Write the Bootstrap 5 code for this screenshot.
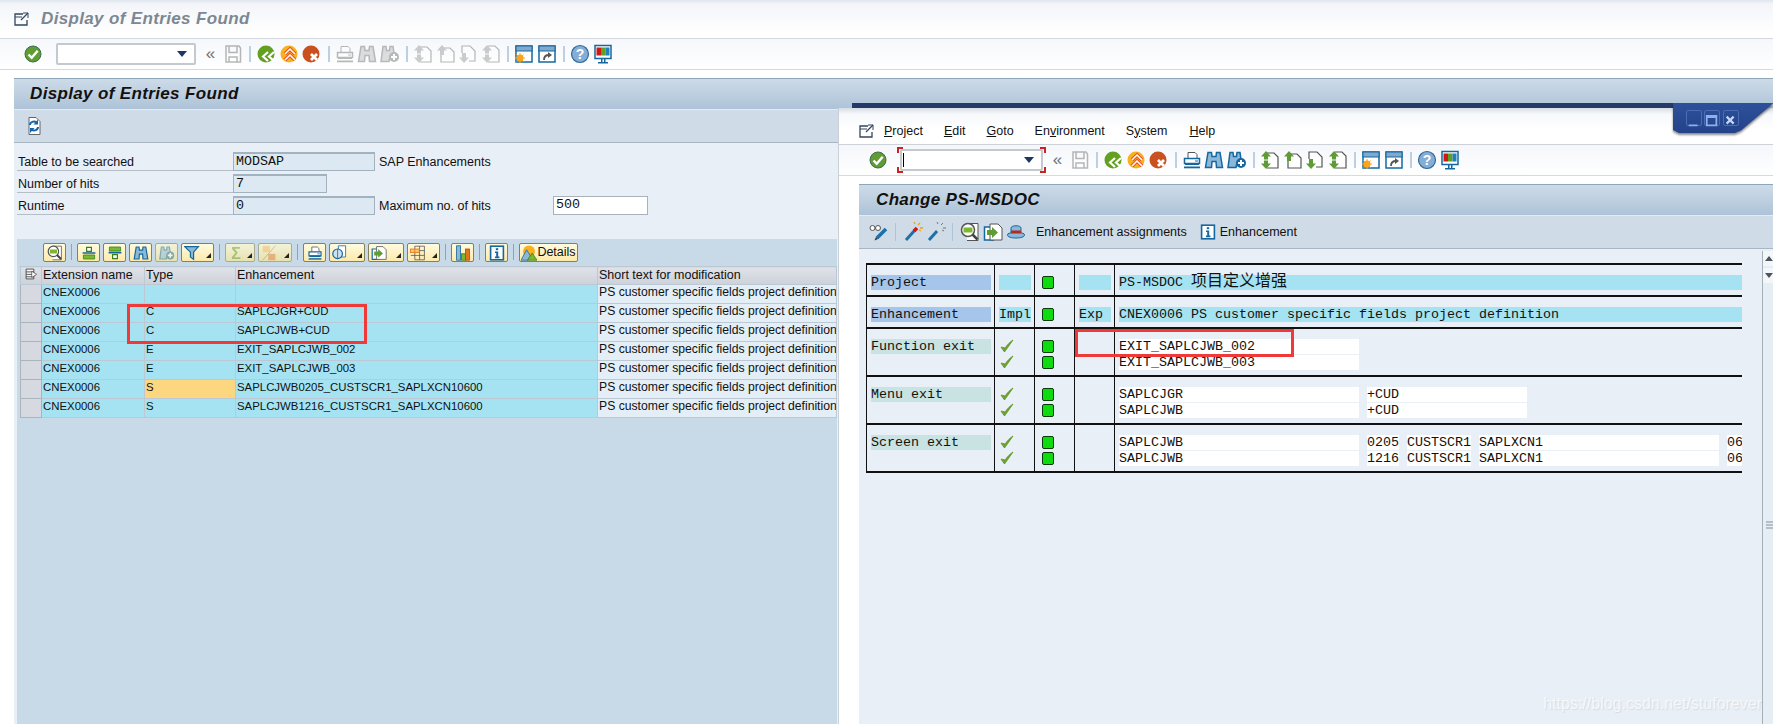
<!DOCTYPE html>
<html lang="en">
<head>
<meta charset="UTF-8">
<meta name="viewport" content="width=device-width, initial-scale=1.0">
<title>Display of Entries Found</title>
<link rel="stylesheet" href="https://cdn.jsdelivr.net/npm/bootstrap@5.3.0/dist/css/bootstrap.min.css">
<style>
    html, body { height: 100%; overflow: hidden; }
    body { background: #fff; font-family: "Liberation Sans", Arial, sans-serif; font-size: 12.5px; color: #111; position: relative; }
    .mono { font-family: "Liberation Mono", "Noto Sans CJK SC", monospace; font-size: 13.33px; }
    .cjk-text { font-size: 16px; font-family: "Noto Sans CJK SC", sans-serif; line-height: 0; }

    /* window title + system toolbar */
    .win-title { height: 39px; padding-left: 13px; background: linear-gradient(#dfe6ee 0, #f3f5f9 4px, #fff 34px); border-bottom: 1px solid #d5dae0; }
    .win-title-text { font-size: 17px; font-weight: bold; font-style: italic; letter-spacing: .35px; color: #7d8791; margin-left: 12px; }
    .title-ico { width: 16px; height: 16px; display: block; flex: none; }
    .sys-bar { height: 31px; padding-left: 22px; background: linear-gradient(#f5f7fb, #fff); border-bottom: 1px solid #d5dae0; }
    .ico { width: 20px; height: 20px; display: block; }
    .ico-box { width: 22.5px; height: 22px; flex: none; display: flex; align-items: center; justify-content: center; }
    .ico-off .ico { filter: grayscale(1) opacity(.42); }
    .bar-sep { width: 11px; flex: none; display: flex; justify-content: center; }
    .bar-sep::before { content: ""; width: 2px; height: 16px; background: #bcd0e2; margin-left: 1px; }
    .cmd-box { width: 140px; height: 22px; margin: 0 4px 0 11px; background: #fff; border: 2px solid #c3c9cf; border-radius: 2px; position: relative; flex: none; }
    .cmd-box::after { content: ""; position: absolute; right: 7px; top: 6px; border: 5px solid transparent; border-top: 6px solid #1f3564; border-bottom: 0; }
    .dbl-arrow { width: 22px; text-align: center; font-size: 17px; color: #707070; line-height: 20px; flex: none; }

    /* screen panel */
    .scr-panel { margin-left: 14px; position: relative; }
    .scr-head { height: 32px; padding-left: 16px; font-size: 17px; font-weight: bold; font-style: italic; letter-spacing: .35px; color: #111; background: linear-gradient(#cddbe8, #aec3d8); border-top: 1px solid #8fa5ba; border-bottom: 1px solid #e4ebf2; }
    .app-bar { height: 33px; padding-left: 9px; background: #cfdbe6; border-bottom: 1px solid #a9b6c2; }
    .scr-body { background: #e8eff6; padding: 9px 0 0 3px; height: 581px; }

    /* selection fields */
    .fld-row { height: 19px; margin-bottom: 3px; }
    .fld-label { width: 216px; height: 19px; border-bottom: 1px solid #b5bec7; padding: 1px 0 0 1px; }
    .fld-val { height: 19px; background: #dde9f2; border: 1px solid #a3b2bf; border-top-width: 2px; padding-left: 2px; line-height: 15px; }
    .fld-wide { width: 142px; }
    .fld-short { width: 94px; }
    .fld-after { padding: 1px 0 0 4px; }
    .fld-after-max { width: 178px; }
    .fld-input { width: 95px; height: 19px; background: #fff; border: 1px solid #a9b2ba; padding-left: 2px; line-height: 16px; }

    /* ALV */
    .alv-wrap { width: 820px; margin-top: 24px; height: 486px; background: #c8d9e7; position: relative; }
    .alv-tools { height: 27px; padding: 4px 0 0 26px; gap: 3px; }
    .alv-btn { height: 19px; border: 1px solid #85805f; border-radius: 2px; background: linear-gradient(#fffbe0, #fdeaa9); display: flex; align-items: center; justify-content: center; font-size: 12.5px; flex: none; overflow: hidden; }
    .alv-btn .ico { width: 16px; height: 16px; }
    .alv-off { border-color: #a8ab94; background: linear-gradient(#f2f2d8, #e8e2b0); }
    .alv-off .ico { filter: opacity(.5); }
    .b23 { width: 23px; } .b30 { width: 30px; } .b33 { width: 33px; } .b34 { width: 34px; } .b36 { width: 36px; } .b59 { width: 59px; }
    .has-menu { justify-content: flex-start; padding-left: 2px; position: relative; }
    .has-menu::after { content: ""; position: absolute; right: 2px; bottom: 3px; border-style: solid; border-width: 0 0 5px 5px; border-color: transparent transparent #222 transparent; }
    .alv-sep { width: 1px; height: 16px; margin: 1px 2px 0; background: #8da3b6; flex: none; }
    .alv-grid { margin-left: 3px; table-layout: fixed; width: 817px; border-collapse: collapse; }
    .alv-grid th, .alv-grid td { height: 19px; padding: 0 0 1px 1px; font-weight: normal; white-space: nowrap; overflow: hidden; border: 1px solid #bcc8d3; line-height: 15px; vertical-align: top; }
    .alv-grid th { height: 18px; padding: 1px 0 0 1px; background: linear-gradient(#dfe2e8, #cdd1d9); }
    .alv-grid th .ico { width: 14px; height: 14px; margin: 0 auto; }
    .alv-grid td { background: #a5e3f3; font-size: 11.4px; }
    .alv-grid td.row-mark { background: #d6dae0; border-color: #aab4bd; }
    .alv-grid td.txt-col { background: #e3eef6; font-size: 12.2px; }
    .alv-grid td.hot { background: #fdd780; }
    .red-box { position: absolute; border: 3px solid #f03a3a; }
    .red-left { left: 110px; top: 65px; width: 240px; height: 40px; }
    .red-right { left: 216px; top: 80px; width: 219px; height: 28px; }

    /* second window, sits over the first */
    .sap-win { position: absolute; left: 838px; top: 108px; right: 0; bottom: 0; background: #fff; border-left: 1px solid #c9d0d8; }
    .win-strip { position: absolute; left: 13px; right: 100px; top: -5px; height: 5px; background: linear-gradient(#1d3a78, #2a3a58); }
    .ctrl-shadow { position: absolute; right: 0; top: -5px; width: 100px; height: 30px; filter: drop-shadow(0 2px 1px rgba(0,0,0,.45)); }
    .win-ctrl { width: 100%; height: 100%; position: relative; background: linear-gradient(#2d5199, #23428a); clip-path: polygon(0 0, 100% 0, 100% 2%, 68% 92%, 62% 100%, 6% 100%, 0 90%); }
    .ctrl-btn { position: absolute; top: 7px; width: 16px; height: 16px; border: 1px solid #4a6db5; border-radius: 2px; }
    .ctrl-1 { left: 13px; } .ctrl-2 { left: 31px; } .ctrl-3 { left: 50px; }
    .menu-row { height: 37px; padding: 10px 0 0 19px; background: linear-gradient(#d6dde6 0, #f6f8fb 6px, #fff 22px); border-bottom: 1px solid #cdd2d8; }
    .menu-item { font-size: 12.5px; }
    .mi1 { margin-left: 10px; } .mi2 { margin-left: 21px; } .mi3 { margin-left: 21px; } .mi4 { margin-left: 21px; } .mi5 { margin-left: 21px; } .mi6 { margin-left: 22px; }
    .sys-bar2 { height: 31px; padding-left: 28px; background: linear-gradient(#f5f7fb, #fff); border-bottom: 1px solid #d5dae0; }
    .cmd-frame { width: 149px; height: 26px; margin: 0 1px 0 7px; padding: 2px 3px; flex: none; background:
        linear-gradient(#d02020, #d02020) 0 0/6px 2px no-repeat, linear-gradient(#d02020, #d02020) 0 0/2px 6px no-repeat,
        linear-gradient(#d02020, #d02020) 100% 0/6px 2px no-repeat, linear-gradient(#d02020, #d02020) 100% 0/2px 6px no-repeat,
        linear-gradient(#d02020, #d02020) 0 100%/6px 2px no-repeat, linear-gradient(#d02020, #d02020) 0 100%/2px 6px no-repeat,
        linear-gradient(#d02020, #d02020) 100% 100%/6px 2px no-repeat, linear-gradient(#d02020, #d02020) 100% 100%/2px 6px no-repeat; }
    .cmd-frame .cmd-box { width: 143px; margin: 0; }
    .cmd-caret { position: absolute; left: 1px; top: 2px; width: 1px; height: 14px; background: #000; }
    .sec-panel { margin: 8px 0 0 20px; }
    .sec-head { height: 32px; padding-left: 17px; font-size: 17px; font-weight: bold; font-style: italic; letter-spacing: .35px; background: linear-gradient(#cddbe8, #aec3d8); border-top: 1px solid #8fa5ba; border-bottom: 1px solid #e4ebf2; }
    .sec-tools { height: 33px; padding-left: 8px; background: #cfdbe6; border-bottom: 1px solid #a9b6c2; }
    .sec-tools .ico-box { width: 23px; }
    .ico-small { width: 16px; height: 16px; }
    .tool-sep { width: 1px; height: 18px; background: #b0c4d6; margin: 0 5px; flex: none; }
    .tool-text { margin-left: 9px; }
    .info-gap { margin-left: 10px; }
    .sec-body { background: #e8eff6; height: 475px; position: relative; }
    .exit-wrap { padding: 14px 0 0 7px; width: 884px; position: relative; }
    .exit-grid { table-layout: fixed; width: 876px; border-collapse: collapse; }
    .exit-grid td { border: 1px solid #111; border-width: 2px 1px; padding: 10px 3px 0 4px; vertical-align: top; }
    .exit-grid td:last-child { border-right: 0; padding-right: 0; }
    .exit-grid tr.h32 td { height: 32px; }
    .exit-grid tr.h48 td { height: 48px; }
    .cell-line { height: 15px; margin-bottom: 1px; line-height: 15px; white-space: nowrap; overflow: hidden; }
    .lbl-blue { background: #a6c5ea; }
    .lbl-teal { background: #c9e2e2; }
    .cyan { background: #a5e3f3; }
    .white-cell { background: #fff; height: 15px; overflow: hidden; flex: none; }
    .w240 { width: 240px; } .w160 { width: 160px; } .w32 { width: 32px; } .w64 { width: 64px; } .w15 { width: 15px; }
    .line-flex { gap: 8px; }
    .led { width: 12px; height: 13px; background: #0fdc0f; border: 1px solid #0a3a0a; border-radius: 2px; margin: 1px 0 0 3px; }
    .ok-tick { width: 14px; height: 14px; display: block; margin-left: 1px; }
    .v-bar { position: absolute; left: 903px; top: 2px; width: 12px; bottom: 0; border-left: 1px solid #a7b0b9; background: #e6eef5; }
    .v-btn { height: 15px; background: #f4f7fa; margin-bottom: 2px; position: relative; }
    .v-btn::after { content: ""; position: absolute; left: 2px; top: 5px; border: 4px solid transparent; }
    .v-up::after { border-bottom: 5px solid #4a5560; border-top: 0; }
    .v-down::after { border-top: 5px solid #4a5560; border-bottom: 0; }
    .v-grip { position: absolute; left: 3px; top: 270px; width: 7px; height: 8px; background: repeating-linear-gradient(#b4bfca 0 2px, transparent 2px 3px); }
    .watermark { position: absolute; right: 11px; bottom: 8px; font-size: 16px; color: rgba(255,255,255,.7); text-shadow: 1px 1px 1px rgba(120,130,140,.18); }
</style>
</head>
<body>
<svg width="0" height="0" class="position-absolute">
  <defs>
    <symbol id="okay" viewBox="0 0 20 20"><circle cx="10" cy="10" r="8" fill="#5f9c36" stroke="#3f6f4a"/><path d="M5.500 10.500l3.200 3.200 6-7" fill="none" stroke="#fff" stroke-width="2.400"/></symbol>
    <symbol id="save" viewBox="0 0 20 20"><path d="M3 2h13l1.500 2v14H3z M6 2.500v6h8v-6 M6 18v-5h8v5" fill="#fff" stroke="#555" stroke-width="1.500"/></symbol>
    <symbol id="back" viewBox="0 0 20 20"><circle cx="10" cy="10" r="8.500" fill="#62a01f"/><path d="M12 8l-5 4.500 5 4.500 M18 8l-5 4.500 5 4.500" fill="none" stroke="#fff" stroke-width="2.200"/></symbol>
    <symbol id="exit" viewBox="0 0 20 20"><circle cx="10" cy="10" r="8.500" fill="#f9b11d"/><path d="M6 10l5-5 5 5 M6 16l5-5 5 5" fill="none" stroke="#e2561c" stroke-width="3.600"/><path d="M6 10l5-5 5 5 M6 16l5-5 5 5" fill="none" stroke="#fff" stroke-width="1.500"/></symbol>
    <symbol id="stop" viewBox="0 0 20 20"><circle cx="10" cy="10" r="8.500" fill="#c9511f"/><path d="M10 10l6 6 M16 10l-6 6" stroke="#fff" stroke-width="2.800"/></symbol>
    <symbol id="print" viewBox="0 0 20 20"><path d="M6 8V2.500h7l2 2V8" fill="#fff" stroke="#555"/><path d="M2.500 8.500h15v5h-15z" fill="#fff" stroke="#15689f" stroke-width="1.500"/><path d="M3 13h14v2H3z" fill="#15689f"/><path d="M2 16.500h16v1.800H2z" fill="#15689f"/><path d="M13 10.500h3v1h-3z" fill="#15689f"/></symbol>
    <symbol id="find" viewBox="0 0 20 20"><path d="M4 2.500h3.500l.5 4h4l.5-4H16l2.500 15h-6l-.5-6H8l-.5 6h-6z" fill="#8bb7d9" stroke="#15689f" stroke-width="1.500"/></symbol>
    <symbol id="findplus" viewBox="0 0 20 20"><path d="M3 2.500h3l.5 4h3l.5-4h3l1 7-4 3-1 5H1z" fill="#8bb7d9" stroke="#15689f" stroke-width="1.500"/><circle cx="14" cy="13" r="5" fill="#15689f"/><path d="M14 10v6 M11 13h6" stroke="#fff" stroke-width="2"/></symbol>
    <symbol id="first" viewBox="0 0 20 20"><path d="M7 3h7l4 4v11H7" fill="#fff" stroke="#555" stroke-width="1.200"/><path d="M6 1L1 6.500h3v3h4v-3h3z M6 19l-5-5.500h3v-3h4v3h3z" fill="#5f9c36"/></symbol>
    <symbol id="prev" viewBox="0 0 20 20"><path d="M7 4h7l4 4v10H5v-7" fill="#fff" stroke="#555" stroke-width="1.200"/><path d="M6 1L1 6.500h3V11h4V6.500h3z" fill="#5f9c36"/></symbol>
    <symbol id="next" viewBox="0 0 20 20"><path d="M4 9V2h8l5 5v10h-6" fill="#fff" stroke="#555" stroke-width="1.200"/><path d="M6 19l-5-5.500h3V9h4v4.500h3z" fill="#5f9c36"/></symbol>
    <symbol id="last" viewBox="0 0 20 20"><path d="M7 2h7l4 4v12H7" fill="#fff" stroke="#555" stroke-width="1.200"/><path d="M6 1L1 6.500h3v3h4v-3h3z M6 19l-5-5.500h3v-3h4v3h3z" fill="#5f9c36"/></symbol>
    <symbol id="newwin" viewBox="0 0 20 20"><rect x="2" y="2" width="16" height="16" fill="#fff" stroke="#15689f" stroke-width="1.500"/><rect x="2" y="2" width="16" height="5" fill="#7fa9cf" stroke="#15689f"/><circle cx="6" cy="14" r="3.500" fill="#f9a51d"/><path d="M6 9v10 M1 14h10 M2.500 10.500l7 7 M9.500 10.500l-7 7" stroke="#f9a51d"/></symbol>
    <symbol id="linkwin" viewBox="0 0 20 20"><rect x="2" y="2" width="16" height="16" fill="#fff" stroke="#15689f" stroke-width="1.500"/><rect x="2" y="2" width="16" height="5" fill="#7fa9cf" stroke="#15689f"/><path d="M7 16c0-4 2-5 5-5" fill="none" stroke="#555" stroke-width="1.800"/><path d="M11 8l4 3-4 3z" fill="#555"/></symbol>
    <symbol id="help" viewBox="0 0 20 20"><circle cx="10" cy="10" r="8.500" fill="#86add3" stroke="#2b6a9e" stroke-width="1.200"/><text x="10" y="15" text-anchor="middle" font-family="Liberation Sans" font-size="14" font-weight="bold" fill="#fff">?</text></symbol>
    <symbol id="screen" viewBox="0 0 20 20"><rect x="2" y="1.500" width="16" height="13" fill="#fff" stroke="#15689f" stroke-width="1.500"/><rect x="3.500" y="3.500" width="4.500" height="8" fill="#d01818"/><rect x="8" y="3.500" width="4.500" height="8" fill="#5fa01f"/><rect x="12.500" y="3.500" width="4" height="8" fill="#1f7fc0"/><path d="M8 15h1.500v3H8z M11 15h1.500v3H11z M5 18h10v1.500H5z" fill="#15689f"/></symbol>
    <symbol id="refresh" viewBox="0 0 20 20"><path d="M5 1.500h7l4 4v13H5z" fill="#fff" stroke="#666"/><path d="M6 9c0-3 4-4.500 6.500-2.500" fill="none" stroke="#1664b0" stroke-width="2"/><path d="M14 3.500v5h-4.500z" fill="#1664b0"/><path d="M14 11c0 3-4 4.500-6.500 2.500" fill="none" stroke="#1664b0" stroke-width="2"/><path d="M6 17v-5h4.500z" fill="#1664b0"/></symbol>
    <symbol id="glasses" viewBox="0 0 20 20"><circle cx="3.500" cy="6" r="2.500" fill="#fff" stroke="#555"/><circle cx="9" cy="6" r="2.500" fill="#fff" stroke="#555"/><path d="M6 6h.5" stroke="#555"/><path d="M8 16l9-9" stroke="#1f6fa8" stroke-width="3.500"/><path d="M5.500 18.500l1.500-3.500 2 2z" fill="#333"/></symbol>
    <symbol id="wand" viewBox="0 0 20 20"><path d="M3 18L12 8" stroke="#1f6fa8" stroke-width="3"/><path d="M11 9l3-3" stroke="#d01818" stroke-width="3.500"/><path d="M15 3l2-2 M17 6h3 M12 2l-1-2 M16 8l2 1" stroke="#f0a020" stroke-width="1.300"/></symbol>
    <symbol id="wandoff" viewBox="0 0 20 20"><path d="M3 18L12 8" stroke="#1f6fa8" stroke-width="3"/><path d="M11 9l3-3" stroke="#d8dde2" stroke-width="3.500"/><path d="M15 3l2-2 M17 6h3 M12 2l-1-2 M16 8l2 1" stroke="#777"/></symbol>
    <symbol id="zoomdoc" viewBox="0 0 20 20"><path d="M7 1.500h11v17H7" fill="#fff" stroke="#555"/><circle cx="8" cy="8" r="6.500" fill="#fff" stroke="#555" stroke-width="1.500"/><path d="M3.500 5.500h9v5h-9z" fill="#7cb82f"/><path d="M12.500 12.500l5 5" stroke="#444" stroke-width="2.500"/></symbol>
    <symbol id="transport" viewBox="0 0 20 20"><path d="M1.500 5h9v13h-9z" fill="#fff" stroke="#15689f" stroke-width="1.500"/><path d="M7 2h8l4 4v12H7z" fill="#fff" stroke="#555"/><path d="M4 8h5V5l6 5.500-6 5.500v-3H4z" fill="#5f9c36"/></symbol>
    <symbol id="hat" viewBox="0 0 20 20"><path d="M5 11V6c0-3 10-3 10 0v5" fill="#8bb7d9" stroke="#15689f"/><path d="M1.500 13c0-2 3-2 3.500-2h10c.5 0 3.500 0 3.500 2s-4 3-8.500 3-8.500-1-8.500-3z" fill="#8bb7d9" stroke="#15689f"/><path d="M5 8.500h10V11H5z" fill="#b8281f"/></symbol>
    <symbol id="sortup" viewBox="0 0 20 20"><path d="M7 3h6v5H7z" fill="#fff" stroke="#3b7f1a" stroke-width="1.500"/><path d="M2 10h16" stroke="#15689f" stroke-width="2"/><path d="M3 12.500h14v5H3z" fill="#7cb82f" stroke="#3b7f1a"/></symbol>
    <symbol id="sortdown" viewBox="0 0 20 20"><path d="M3 2.500h14v5H3z" fill="#7cb82f" stroke="#3b7f1a"/><path d="M2 9.500h16" stroke="#15689f" stroke-width="2"/><path d="M7 12h6v5H7z" fill="#fff" stroke="#3b7f1a" stroke-width="1.500"/></symbol>
    <symbol id="funnel" viewBox="0 0 20 20"><path d="M1 2h17l-6 7v9l-4-3V9z" fill="#8bb7d9" stroke="#15689f" stroke-width="1.500"/></symbol>
    <symbol id="sigma" viewBox="0 0 20 20"><text x="10" y="17" text-anchor="middle" font-family="Liberation Sans" font-size="20" font-weight="bold" fill="#5f9c36">Σ</text></symbol>
    <symbol id="subsum" viewBox="0 0 20 20"><rect x="2" y="1" width="9" height="8" fill="#f4b860"/><rect x="9" y="11" width="9" height="8" fill="#e27b3a"/><path d="M18 1L2 19" stroke="#777"/></symbol>
    <symbol id="views" viewBox="0 0 20 20"><path d="M8 1h9v14H8z" fill="#fff" stroke="#15689f"/><circle cx="7" cy="11" r="6" fill="#cfe0ee" stroke="#15689f" stroke-width="1.500"/><path d="M7 5v12" stroke="#15689f"/></symbol>
    <symbol id="layout" viewBox="0 0 20 20"><path d="M6 1.500v17 M12 1.500v17 M18 1.500v17 M1 7h17 M1 13h17 M6 1.500h12 M6 18.500h12" stroke="#555"/><rect x="0.500" y="5" width="11" height="4.500" fill="#f9c860" stroke="#e2751c"/><path d="M6 5v4.500" stroke="#e2751c"/></symbol>
    <symbol id="chart" viewBox="0 0 20 20"><rect x="2" y="1" width="5" height="18" fill="#8bb7d9" stroke="#15689f"/><rect x="8" y="11" width="5" height="8" fill="#7cb82f" stroke="#3b7f1a"/><rect x="13" y="5" width="5" height="14" fill="#e2751c" stroke="#b04a10"/></symbol>
    <symbol id="info" viewBox="0 0 20 20"><rect x="2" y="1.500" width="16" height="17" fill="#fff" stroke="#15689f" stroke-width="2"/><rect x="8.500" y="4" width="3" height="2.500" fill="#15689f"/><path d="M7.500 8h4v6.500h1.500v2H7.500v-2H9V10H7.500z" fill="#15689f"/></symbol>
    <symbol id="mount" viewBox="0 0 20 20"><circle cx="10" cy="8" r="7.500" fill="#f9b11d"/><path d="M0 19L7 6l5 8-3 5z" fill="#8bb7d9" stroke="#15689f"/><path d="M8 19l6-9 6 9z" fill="#7cb82f" stroke="#3b7f1a"/></symbol>
    <symbol id="rowsel" viewBox="0 0 20 20"><path d="M3 3h11v14H3z M3 7h11 M3 10.500h11 M3 14h11" fill="#fff" stroke="#444" stroke-width="1.300"/><path d="M11 6l7 4.500-7 4.500z" fill="#fff" stroke="#444"/></symbol>
    <symbol id="tick" viewBox="0 0 14 14"><path d="M1 8l3.500 5L13 1c-4 2.500-6 5.500-8 8z" fill="#6fa52e" stroke="#5a8f24" stroke-width=".8"/></symbol>
    <symbol id="wintop" viewBox="0 0 16 16"><path d="M14 9v5H2V3h8" fill="none" stroke="#33465f" stroke-width="1.300"/><path d="M2 6h7" stroke="#33465f"/><path d="M15 2l-7 7" stroke="#33465f" stroke-width="1.300"/><path d="M10 2h5v5" fill="none" stroke="#33465f"/></symbol>
  </defs>
</svg>

<!-- first window -->
<div class="win-title d-flex align-items-center">
    <svg class="title-ico"><use href="#wintop"/></svg>
    <span class="win-title-text">Display of Entries Found</span>
</div>
<div class="sys-bar d-flex align-items-center">
    <div class="ico-box"><svg class="ico"><use href="#okay"/></svg></div>
    <div class="cmd-box"></div>
    <div class="dbl-arrow">«</div>
    <div class="ico-box ico-off"><svg class="ico"><use href="#save"/></svg></div>
    <div class="bar-sep"></div>
    <div class="ico-box"><svg class="ico"><use href="#back"/></svg></div>
    <div class="ico-box"><svg class="ico"><use href="#exit"/></svg></div>
    <div class="ico-box"><svg class="ico"><use href="#stop"/></svg></div>
    <div class="bar-sep"></div>
    <div class="ico-box ico-off"><svg class="ico"><use href="#print"/></svg></div>
    <div class="ico-box ico-off"><svg class="ico"><use href="#find"/></svg></div>
    <div class="ico-box ico-off"><svg class="ico"><use href="#findplus"/></svg></div>
    <div class="bar-sep"></div>
    <div class="ico-box ico-off"><svg class="ico"><use href="#first"/></svg></div>
    <div class="ico-box ico-off"><svg class="ico"><use href="#prev"/></svg></div>
    <div class="ico-box ico-off"><svg class="ico"><use href="#next"/></svg></div>
    <div class="ico-box ico-off"><svg class="ico"><use href="#last"/></svg></div>
    <div class="bar-sep"></div>
    <div class="ico-box"><svg class="ico"><use href="#newwin"/></svg></div>
    <div class="ico-box"><svg class="ico"><use href="#linkwin"/></svg></div>
    <div class="bar-sep"></div>
    <div class="ico-box"><svg class="ico"><use href="#help"/></svg></div>
    <div class="ico-box"><svg class="ico"><use href="#screen"/></svg></div>
</div>

<div class="scr-panel mt-2">
    <div class="scr-head d-flex align-items-center">Display of Entries Found</div>
    <div class="app-bar d-flex align-items-center">
        <div class="ico-box"><svg class="ico"><use href="#refresh"/></svg></div>
    </div>
    <div class="scr-body">
        <div class="fld-row d-flex">
            <div class="fld-label">Table to be searched</div>
            <div class="fld-val fld-wide mono">MODSAP</div>
            <div class="fld-after">SAP Enhancements</div>
        </div>
        <div class="fld-row d-flex">
            <div class="fld-label">Number of hits</div>
            <div class="fld-val fld-short mono">7</div>
        </div>
        <div class="fld-row d-flex">
            <div class="fld-label">Runtime</div>
            <div class="fld-val fld-wide mono">0</div>
            <div class="fld-after fld-after-max">Maximum no. of hits</div>
            <div class="fld-input mono">500</div>
        </div>

        <div class="alv-wrap">
            <div class="alv-tools d-flex">
                <div class="alv-btn b23"><svg class="ico"><use href="#zoomdoc"/></svg></div>
                <div class="alv-sep"></div>
                <div class="alv-btn b23"><svg class="ico"><use href="#sortup"/></svg></div>
                <div class="alv-btn b23"><svg class="ico"><use href="#sortdown"/></svg></div>
                <div class="alv-btn b23"><svg class="ico"><use href="#find"/></svg></div>
                <div class="alv-btn alv-off b23"><svg class="ico"><use href="#findplus"/></svg></div>
                <div class="alv-btn has-menu b33"><svg class="ico"><use href="#funnel"/></svg></div>
                <div class="alv-sep"></div>
                <div class="alv-btn alv-off has-menu b30"><svg class="ico"><use href="#sigma"/></svg></div>
                <div class="alv-btn alv-off has-menu b34"><svg class="ico"><use href="#subsum"/></svg></div>
                <div class="alv-sep"></div>
                <div class="alv-btn b23"><svg class="ico"><use href="#print"/></svg></div>
                <div class="alv-btn has-menu b36"><svg class="ico"><use href="#views"/></svg></div>
                <div class="alv-btn has-menu b36"><svg class="ico"><use href="#transport"/></svg></div>
                <div class="alv-btn has-menu b33"><svg class="ico"><use href="#layout"/></svg></div>
                <div class="alv-sep"></div>
                <div class="alv-btn b23"><svg class="ico"><use href="#chart"/></svg></div>
                <div class="alv-sep"></div>
                <div class="alv-btn b23"><svg class="ico"><use href="#info"/></svg></div>
                <div class="alv-sep"></div>
                <div class="alv-btn b59"><svg class="ico"><use href="#mount"/></svg>Details</div>
            </div>
            <table class="alv-grid">
                <colgroup><col style="width:21px"><col style="width:103px"><col style="width:91px"><col style="width:362px"><col></colgroup>
                <thead>
                    <tr><th class="p-0"><svg class="ico"><use href="#rowsel"/></svg></th><th>Extension name</th><th>Type</th><th>Enhancement</th><th>Short text for modification</th></tr>
                </thead>
                <tbody id="alvRows"></tbody>
            </table>
            <div class="red-box red-left"></div>
        </div>
    </div>
</div>

<!-- second window -->
<div class="sap-win">
    <div class="win-strip"></div>
    <div class="ctrl-shadow">
        <div class="win-ctrl">
            <div class="ctrl-btn ctrl-1"><svg viewBox="0 0 16 16"><path d="M2 12h10v2H2z" fill="#8fb0f0"/></svg></div>
            <div class="ctrl-btn ctrl-2"><svg viewBox="0 0 16 16"><path d="M2 2h11v11H2z M2 3.500h11" fill="none" stroke="#8fb0f0" stroke-width="2"/></svg></div>
            <div class="ctrl-btn ctrl-3"><svg viewBox="0 0 16 16"><path d="M3 3l8 8 M11 3l-8 8" stroke="#c4d6f8" stroke-width="2.500"/></svg></div>
        </div>
    </div>
    <div class="menu-row d-flex align-items-center">
        <svg class="title-ico"><use href="#wintop"/></svg>
        <span class="menu-item mi1"><u>P</u>roject</span>
        <span class="menu-item mi2"><u>E</u>dit</span>
        <span class="menu-item mi3"><u>G</u>oto</span>
        <span class="menu-item mi4">En<u>v</u>ironment</span>
        <span class="menu-item mi5">S<u>y</u>stem</span>
        <span class="menu-item mi6"><u>H</u>elp</span>
    </div>
    <div class="sys-bar2 d-flex align-items-center">
        <div class="ico-box"><svg class="ico"><use href="#okay"/></svg></div>
        <div class="cmd-frame"><div class="cmd-box"><div class="cmd-caret"></div></div></div>
        <div class="dbl-arrow">«</div>
        <div class="ico-box ico-off"><svg class="ico"><use href="#save"/></svg></div>
        <div class="bar-sep"></div>
        <div class="ico-box"><svg class="ico"><use href="#back"/></svg></div>
        <div class="ico-box"><svg class="ico"><use href="#exit"/></svg></div>
        <div class="ico-box"><svg class="ico"><use href="#stop"/></svg></div>
        <div class="bar-sep"></div>
        <div class="ico-box"><svg class="ico"><use href="#print"/></svg></div>
        <div class="ico-box"><svg class="ico"><use href="#find"/></svg></div>
        <div class="ico-box"><svg class="ico"><use href="#findplus"/></svg></div>
        <div class="bar-sep"></div>
        <div class="ico-box"><svg class="ico"><use href="#first"/></svg></div>
        <div class="ico-box"><svg class="ico"><use href="#prev"/></svg></div>
        <div class="ico-box"><svg class="ico"><use href="#next"/></svg></div>
        <div class="ico-box"><svg class="ico"><use href="#last"/></svg></div>
        <div class="bar-sep"></div>
        <div class="ico-box"><svg class="ico"><use href="#newwin"/></svg></div>
        <div class="ico-box"><svg class="ico"><use href="#linkwin"/></svg></div>
        <div class="bar-sep"></div>
        <div class="ico-box"><svg class="ico"><use href="#help"/></svg></div>
        <div class="ico-box"><svg class="ico"><use href="#screen"/></svg></div>
    </div>
    <div class="sec-panel">
        <div class="sec-head d-flex align-items-center">Change PS-MSDOC</div>
        <div class="sec-tools d-flex align-items-center">
            <div class="ico-box"><svg class="ico"><use href="#glasses"/></svg></div>
            <div class="tool-sep"></div>
            <div class="ico-box"><svg class="ico"><use href="#wand"/></svg></div>
            <div class="ico-box"><svg class="ico"><use href="#wandoff"/></svg></div>
            <div class="tool-sep"></div>
            <div class="ico-box"><svg class="ico"><use href="#zoomdoc"/></svg></div>
            <div class="ico-box"><svg class="ico"><use href="#transport"/></svg></div>
            <div class="ico-box"><svg class="ico"><use href="#hat"/></svg></div>
            <span class="tool-text">Enhancement assignments</span>
            <div class="ico-box info-gap"><svg class="ico-small"><use href="#info"/></svg></div>
            <span>Enhancement</span>
        </div>
        <div class="sec-body">
            <div class="exit-wrap">
                <table class="exit-grid mono">
                    <colgroup><col style="width:128px"><col style="width:40px"><col style="width:40px"><col style="width:40px"><col></colgroup>
                    <tr class="h32">
                        <td><div class="cell-line lbl-blue">Project</div></td>
                        <td><div class="cell-line cyan"></div></td>
                        <td><div class="led"></div></td>
                        <td><div class="cell-line cyan"></div></td>
                        <td><div class="cell-line cyan overflow-visible">PS-MSDOC <span class="cjk-text">项目定义增强</span></div></td>
                    </tr>
                    <tr class="h32">
                        <td><div class="cell-line lbl-blue">Enhancement</div></td>
                        <td><div class="cell-line cyan">Impl</div></td>
                        <td><div class="led"></div></td>
                        <td><div class="cell-line cyan">Exp</div></td>
                        <td><div class="cell-line cyan">CNEX0006 PS customer specific fields project definition</div></td>
                    </tr>
                    <tr class="h48">
                        <td><div class="cell-line lbl-teal">Function exit</div></td>
                        <td><div class="cell-line"><svg class="ok-tick"><use href="#tick"/></svg></div><div class="cell-line"><svg class="ok-tick"><use href="#tick"/></svg></div></td>
                        <td><div class="cell-line"><div class="led"></div></div><div class="cell-line"><div class="led"></div></div></td>
                        <td></td>
                        <td>
                            <div class="cell-line d-flex line-flex"><div class="white-cell w240">EXIT_SAPLCJWB_002</div></div>
                            <div class="cell-line d-flex line-flex"><div class="white-cell w240">EXIT_SAPLCJWB_003</div></div>
                        </td>
                    </tr>
                    <tr class="h48">
                        <td><div class="cell-line lbl-teal">Menu exit</div></td>
                        <td><div class="cell-line"><svg class="ok-tick"><use href="#tick"/></svg></div><div class="cell-line"><svg class="ok-tick"><use href="#tick"/></svg></div></td>
                        <td><div class="cell-line"><div class="led"></div></div><div class="cell-line"><div class="led"></div></div></td>
                        <td></td>
                        <td>
                            <div class="cell-line d-flex line-flex"><div class="white-cell w240">SAPLCJGR</div><div class="white-cell w160">+CUD</div></div>
                            <div class="cell-line d-flex line-flex"><div class="white-cell w240">SAPLCJWB</div><div class="white-cell w160">+CUD</div></div>
                        </td>
                    </tr>
                    <tr class="h48">
                        <td><div class="cell-line lbl-teal">Screen exit</div></td>
                        <td><div class="cell-line"><svg class="ok-tick"><use href="#tick"/></svg></div><div class="cell-line"><svg class="ok-tick"><use href="#tick"/></svg></div></td>
                        <td><div class="cell-line"><div class="led"></div></div><div class="cell-line"><div class="led"></div></div></td>
                        <td></td>
                        <td>
                            <div class="cell-line d-flex line-flex"><div class="white-cell w240">SAPLCJWB</div><div class="white-cell w32">0205</div><div class="white-cell w64">CUSTSCR1</div><div class="white-cell w240">SAPLXCN1</div><div class="white-cell w15">06</div></div>
                            <div class="cell-line d-flex line-flex"><div class="white-cell w240">SAPLCJWB</div><div class="white-cell w32">1216</div><div class="white-cell w64">CUSTSCR1</div><div class="white-cell w240">SAPLXCN1</div><div class="white-cell w15">06</div></div>
                        </td>
                    </tr>
                </table>
                <div class="red-box red-right"></div>
            </div>
            <div class="v-bar">
                <div class="v-btn v-up"></div>
                <div class="v-btn v-down"></div>
                <div class="v-grip"></div>
            </div>
            <div class="watermark">https://blog.csdn.net/stuforever</div>
        </div>
    </div>
</div>

<script src="https://cdn.jsdelivr.net/npm/bootstrap@5.3.0/dist/js/bootstrap.bundle.min.js"></script>
<script>
    // ALV result rows
    let rows = [
        ['', ''],
        ['C', 'SAPLCJGR+CUD'],
        ['C', 'SAPLCJWB+CUD'],
        ['E', 'EXIT_SAPLCJWB_002'],
        ['E', 'EXIT_SAPLCJWB_003'],
        ['S', 'SAPLCJWB0205_CUSTSCR1_SAPLXCN10600'],
        ['S', 'SAPLCJWB1216_CUSTSCR1_SAPLXCN10600']
    ];
    let body = document.getElementById('alvRows');
    rows.forEach((row, i) => {
        let hot = i === 5 ? ' class="hot"' : '';
        body.innerHTML += `<tr><td class="row-mark"></td><td>CNEX0006</td><td${hot}>${row[0]}</td><td>${row[1]}</td><td class="txt-col">PS customer specific fields project definition</td></tr>`;
    });
</script>
</body>
</html>
